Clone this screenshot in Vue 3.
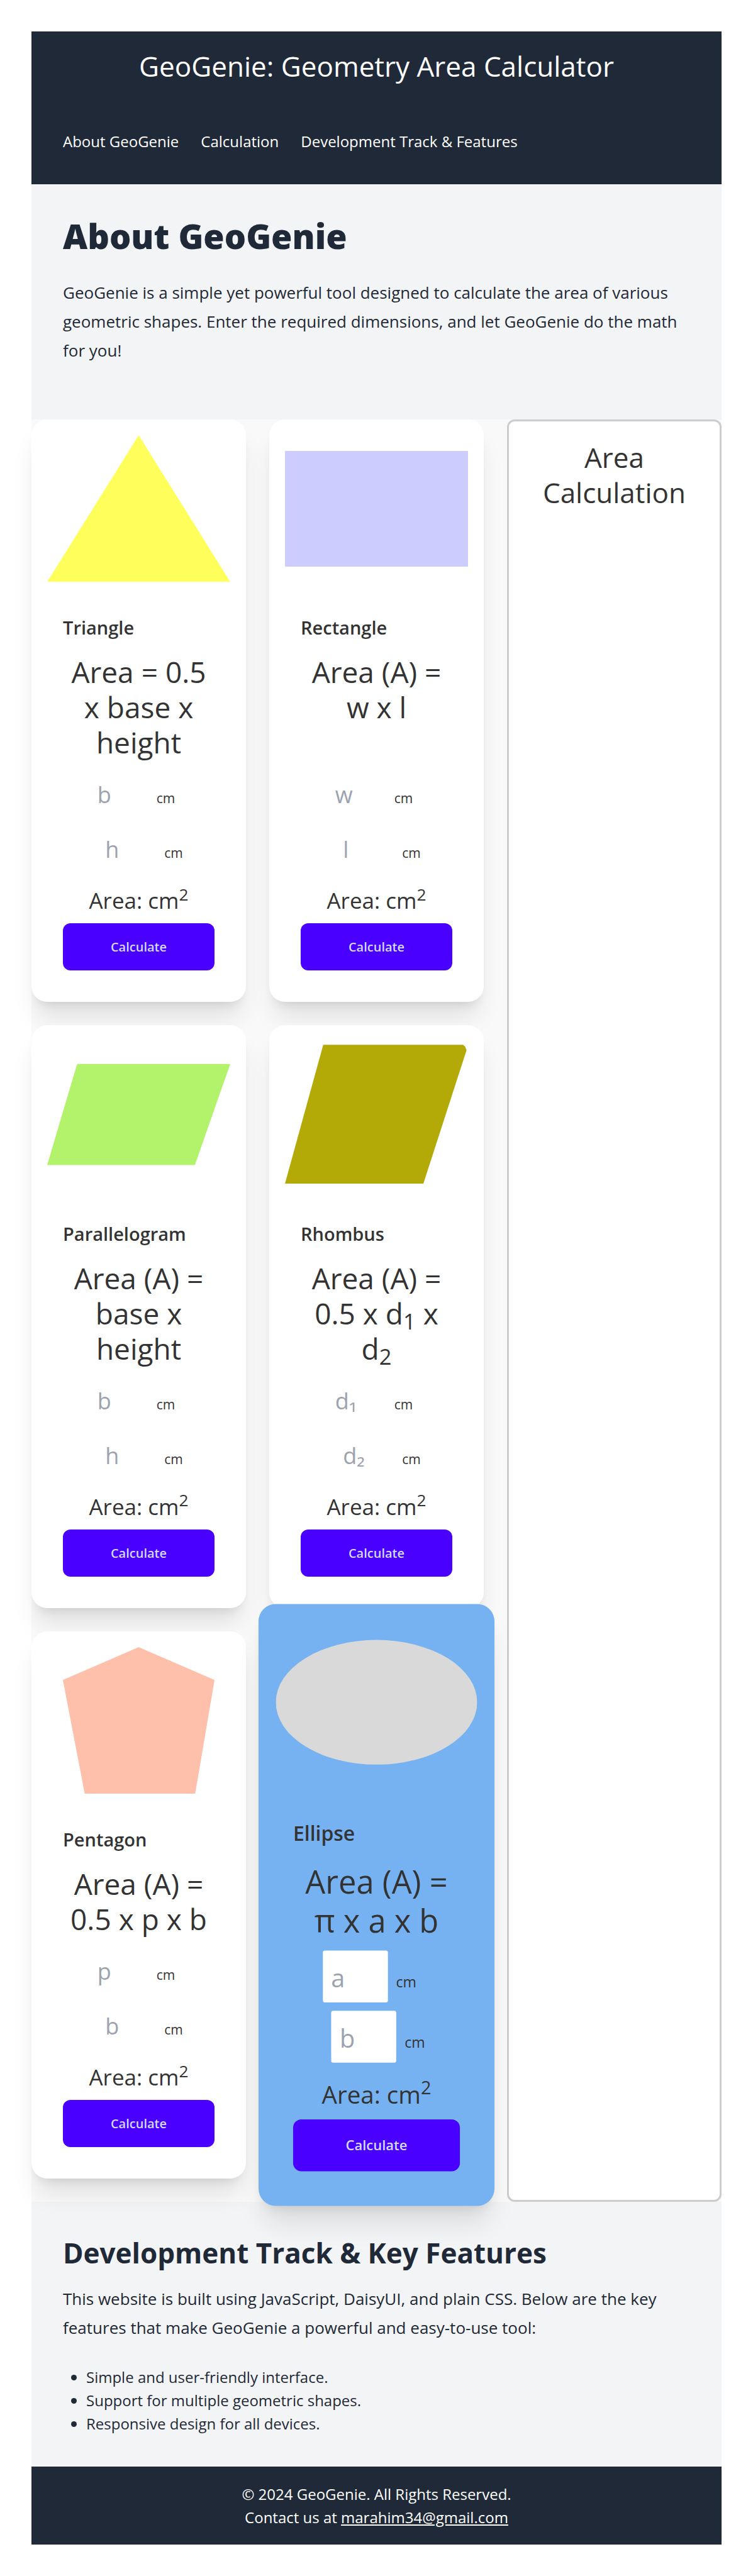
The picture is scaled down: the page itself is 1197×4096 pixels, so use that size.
<script setup>
const shapes = [
  {
    name: 'Triangle',
    fill: '#ffff5c',
    points: '186.5,0 373,299 0,299',
    formula: [{ text: 'Area = 0.5 x base x height' }],
    inputs: ['b', 'h'],
  },
  {
    name: 'Rectangle',
    fill: '#ccccff',
    points: '0,32 373,32 373,268 0,268',
    formula: [{ text: 'Area (A) = w x l' }],
    inputs: ['w', 'l'],
  },
  {
    name: 'Parallelogram',
    fill: '#b3f26b',
    points: '61,47 373,47 301,253 0,253',
    formula: [{ text: 'Area (A) = base x height' }],
    inputs: ['b', 'h'],
  },
  {
    name: 'Rhombus',
    fill: '#b3a907',
    points: '78,8 363,8 367,12 370,19 282,291 0,291',
    formula: [{ text: 'Area (A) = 0.5 x d' }, { sub: '1' }, { text: ' x d' }, { sub: '2' }],
    inputs: ['d₁', 'd₂'],
  },
  {
    name: 'Pentagon',
    fill: '#ffc0ab',
    points: '186.5,0 341,67 301.5,299 76.5,299 32,67',
    formula: [{ text: 'Area (A) = 0.5 x p x b' }],
    inputs: ['p', 'b'],
  },
  {
    name: 'Ellipse',
    fill: '#d9d9d9',
    ellipse: true,
    active: true,
    formula: [{ text: 'Area (A) = π x a x b' }],
    inputs: ['a', 'b'],
  },
]

const features = [
  'Simple and user-friendly interface.',
  'Support for multiple geometric shapes.',
  'Responsive design for all devices.',
]
</script>

<template>
  <div class="page">
    <header class="header">
      <h1 class="site-title">GeoGenie: Geometry Area Calculator</h1>
      <nav class="nav">
        <a href="#about">About GeoGenie</a>
        <a href="#calculation">Calculation</a>
        <a href="#features">Development Track &amp; Features</a>
      </nav>
    </header>

    <section id="about" class="about">
      <h2 class="about-title">About GeoGenie</h2>
      <p class="lead">
        GeoGenie is a simple yet powerful tool designed to calculate the area of various geometric
        shapes. Enter the required dimensions, and let GeoGenie do the math for you!
      </p>
    </section>

    <main id="calculation" class="board">
      <div class="cards">
        <article
          v-for="shape in shapes"
          :key="shape.name"
          class="card"
          :class="{ active: shape.active }"
        >
          <figure class="figure">
            <svg viewBox="0 0 373 299" role="img" :aria-label="shape.name">
              <ellipse v-if="shape.ellipse" cx="186.5" cy="150" rx="186.5" ry="115.5" :fill="shape.fill" />
              <polygon v-else :points="shape.points" :fill="shape.fill" />
            </svg>
          </figure>
          <div class="card-body">
            <h2 class="card-title">{{ shape.name }}</h2>
            <p class="formula">
              <template v-for="(part, i) in shape.formula" :key="i"><sub v-if="part.sub">{{ part.sub }}</sub><template v-else>{{ part.text }}</template></template>
            </p>
            <label v-for="(field, i) in shape.inputs" :key="i" class="field">
              <input type="text" inputmode="decimal" :placeholder="field" :aria-label="field" />
              <span>cm</span>
            </label>
            <p class="result">Area: cm<sup>2</sup></p>
            <button type="button" class="button">Calculate</button>
          </div>
        </article>
      </div>
      <aside class="panel">
        <h2 class="panel-title">Area Calculation</h2>
      </aside>
    </main>

    <section id="features" class="features">
      <h2 class="features-title">Development Track &amp; Key Features</h2>
      <p class="lead">
        This website is built using JavaScript, DaisyUI, and plain CSS. Below are the key features
        that make GeoGenie a powerful and easy-to-use tool:
      </p>
      <ul class="list">
        <li v-for="item in features" :key="item">{{ item }}</li>
      </ul>
    </section>

    <footer class="footer">
      <p>© 2024 GeoGenie. All Rights Reserved.</p>
      <p>Contact us at <a href="mailto:marahim34@gmail.com">marahim34@gmail.com</a></p>
    </footer>
  </div>
</template>

<style>
body {
  margin: 0;
  background: #fff;
}
</style>

<style scoped>
.page {
  box-sizing: border-box;
  padding: 50px;
  font-family: 'Open Sans', 'Noto Sans', sans-serif;
  font-size: 24px;
  line-height: 37px;
  color: #1f2937;
}

h1,
h2,
p,
ul,
figure {
  margin: 0;
  padding: 0;
}

.header {
  padding-top: 27px;
  background: #1f2937;
  color: #fff;
}

.site-title {
  font-size: 44px;
  line-height: 56px;
  font-weight: 400;
  text-align: center;
}

.nav {
  display: flex;
  gap: 35px;
  margin-top: 23px;
  padding: 50px;
}

.nav a {
  color: inherit;
  text-decoration: none;
}

.about {
  padding: 51px 50px 87px;
  background: #f3f4f6;
}

.about-title {
  margin-bottom: 36px;
  font-size: 54px;
  line-height: 62px;
  font-weight: 800;
}

.lead {
  font-size: 26px;
  line-height: 46px;
}

.board {
  display: grid;
  grid-template-columns: repeat(3, 1fr);
  gap: 37px;
  background: #f9f9f9;
}

.cards {
  grid-column: span 2;
  display: grid;
  grid-template-columns: repeat(2, 1fr);
  gap: 37px;
  padding-bottom: 37px;
}

.card {
  position: relative;
  display: flex;
  flex-direction: column;
  border-radius: 25px;
  background: #fff;
  color: #333;
  box-shadow:
    0 31px 39px -8px rgb(0 0 0 / 0.1),
    0 12px 16px -9px rgb(0 0 0 / 0.1);
}

.card.active {
  background: #76b2f1;
  transform: scale(1.1);
}

.figure {
  padding: 25px 25px 0;
}

.figure svg {
  display: block;
  width: 100%;
}

.card-body {
  flex: 1;
  display: flex;
  flex-direction: column;
  gap: 12px;
  padding: 51px 50px 50px;
}

.card-title {
  font-size: 29px;
  line-height: 44px;
  font-weight: 600;
}

.formula {
  flex: 1;
  padding: 8px 0 4px;
  font-size: 46px;
  line-height: 56px;
  text-align: center;
}

sub,
sup {
  position: relative;
  font-size: 75%;
  line-height: 0;
  vertical-align: baseline;
}

sub {
  bottom: -0.25em;
}

sup {
  top: -0.5em;
}

.field {
  display: flex;
  justify-content: center;
  align-items: baseline;
  gap: 12px;
  padding-right: 20px;
  font-size: 21px;
}

.field + .field {
  padding-right: 0;
  padding-left: 5px;
}

.field input {
  box-sizing: border-box;
  width: 94px;
  height: 75px;
  padding: 4px 12px 0;
  border: 0;
  border-radius: 3px;
  background: #fff;
  font: inherit;
  font-size: 36px;
  color: #333;
}

.field input::placeholder {
  color: #9ca3af;
  opacity: 1;
}

.result {
  padding-top: 10px;
  font-size: 35px;
  line-height: 48px;
  text-align: center;
}

.button {
  height: 75px;
  border: 0;
  border-radius: 12px;
  background: #4a00ff;
  color: #d1dbff;
  font: inherit;
  font-size: 20px;
  font-weight: 600;
}

.panel {
  padding: 29px 27px;
  border: 3px solid #ccc;
  border-radius: 12px;
  background: #fff;
  color: #333;
}

.panel-title {
  font-size: 44px;
  line-height: 56px;
  font-weight: 400;
  text-align: center;
}

.features {
  padding: 53px 50px 50px;
  background: #f3f4f6;
}

.features-title {
  margin-bottom: 22px;
  font-size: 44px;
  line-height: 56px;
  font-weight: 700;
}

.list {
  margin-top: 37px;
  padding-left: 37px;
}

.footer {
  padding: 25px;
  background: #1f2937;
  color: #fff;
  text-align: center;
}

.footer a {
  color: inherit;
  text-decoration: underline;
}
</style>
